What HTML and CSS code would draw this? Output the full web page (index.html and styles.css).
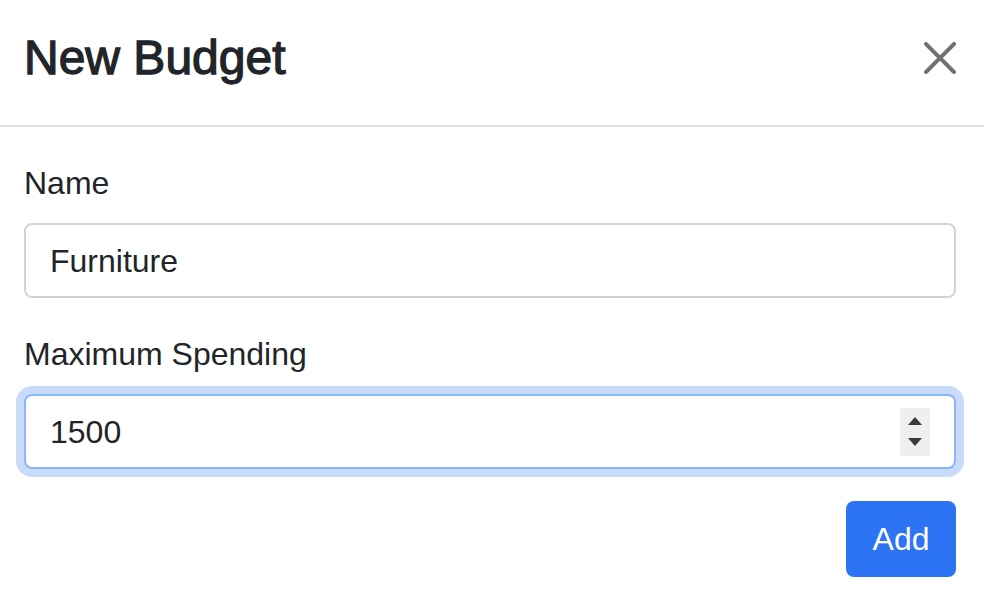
FILE: index.html
```html
<!DOCTYPE html>
<html lang="en">
<head>
<meta charset="utf-8">
<title>New Budget</title>
<link rel="stylesheet" href="styles.css">
</head>
<body>
<div class="modal">
  <div class="modal-header">
    <h4 class="modal-title">New Budget</h4>
    <button class="btn-close" type="button" aria-label="Close">
      <svg viewBox="0 0 16 16" width="32" height="32"><path d="M.293.293a1 1 0 0 1 1.414 0L8 6.586 14.293.293a1 1 0 1 1 1.414 1.414L9.414 8l6.293 6.293a1 1 0 0 1-1.414 1.414L8 9.414l-6.293 6.293a1 1 0 0 1-1.414-1.414L6.586 8 .293 1.707a1 1 0 0 1 0-1.414z"/></svg>
    </button>
  </div>
  <form class="modal-body">
    <div class="group">
      <label class="label" for="name">Name</label>
      <div class="field">
        <input class="control" id="name" type="text" value="Furniture">
      </div>
    </div>
    <div class="group">
      <label class="label" for="max">Maximum Spending</label>
      <div class="field focused">
        <input class="control" id="max" type="text" value="1500">
        <span class="spinner">
          <span class="tri up"></span>
          <span class="tri down"></span>
        </span>
      </div>
    </div>
    <div class="actions">
      <button class="btn-primary" type="button">Add</button>
    </div>
  </form>
</div>
</body>
</html>
```
FILE: styles.css
```css
* { box-sizing: border-box; }
html, body { margin: 0; padding: 0; background: #fff; }
body {
  font-family: "Liberation Sans", Arial, sans-serif;
  font-size: 32px;
  color: #212529;
}
.modal-header {
  display: flex;
  align-items: center;
  justify-content: space-between;
  padding: 27px 28px 36px 24px;
  border-bottom: 2px solid #dee2e6;
}
.modal-title {
  margin: 0;
  font-size: 48px;
  line-height: 62px;
  font-weight: 400;
  -webkit-text-stroke: 1.3px #212529;
  color: #212529;
}
.btn-close {
  border: 0;
  background: none;
  padding: 0;
  width: 32px;
  height: 32px;
  display: flex;
  opacity: 0.55;
}
.btn-close svg { fill: #000; display: block; }
.modal-body {
  display: block;
  padding: 32px 28px 16px 24px;
}
.group { margin-bottom: 32px; }
.label {
  display: block;
  line-height: 48px;
  margin-bottom: 16px;
}
.field {
  display: flex;
  align-items: center;
  height: 75px;
  border: 2px solid #ced4da;
  border-radius: 8px;
  padding: 0 24px 0 24px;
  background: #fff;
}
.field.focused {
  border-color: #8bb6f8;
  box-shadow: 0 0 0 8px #c9dbfb;
  padding-right: 24px;
}
.control {
  flex: 1;
  min-width: 0;
  border: 0;
  outline: 0;
  padding: 0;
  margin: 0;
  font: inherit;
  color: #212529;
  background: transparent;
  line-height: 48px;
}
.spinner {
  width: 30px;
  height: 48px;
  background: #efefef;
  border-radius: 3px;
  display: flex;
  flex-direction: column;
  align-items: center;
  justify-content: center;
  gap: 13px;
}
.tri {
  width: 0;
  height: 0;
  border-left: 7px solid transparent;
  border-right: 7px solid transparent;
}
.tri.up { border-bottom: 8px solid #3a3a3a; }
.tri.down { border-top: 8px solid #3a3a3a; }
.actions {
  display: flex;
  justify-content: flex-end;
  margin-top: 2px;
}
.btn-primary {
  font: inherit;
  color: #fff;
  background: #2d74f5;
  border: 0;
  border-radius: 8px;
  height: 76px;
  width: 110px;
  padding: 0;
  line-height: 48px;
}
```
